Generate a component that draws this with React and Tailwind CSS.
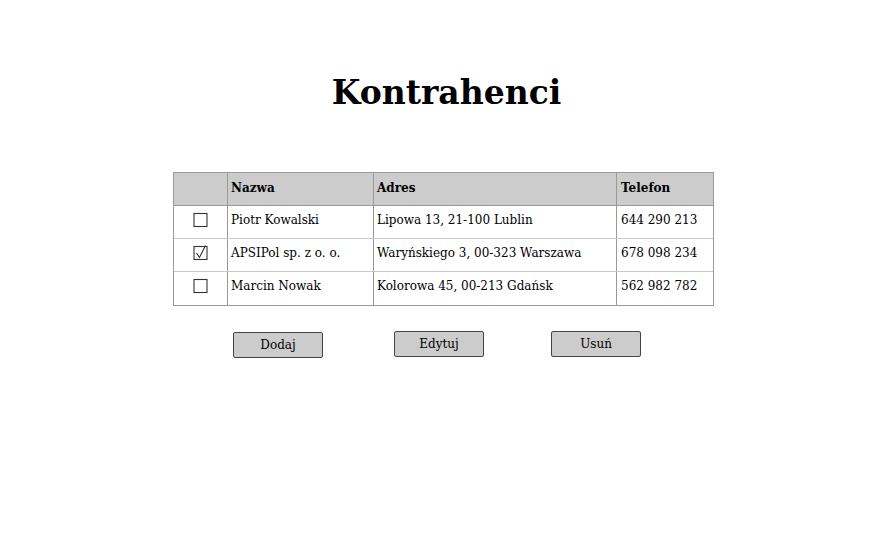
import React from 'react';

const rows = [
  { checked: false, name: 'Piotr Kowalski', address: 'Lipowa 13, 21-100 Lublin', phone: '644 290 213' },
  { checked: true, name: 'APSIPol sp. z o. o.', address: 'Waryńskiego 3, 00-323 Warszawa', phone: '678 098 234' },
  { checked: false, name: 'Marcin Nowak', address: 'Kolorowa 45, 00-213 Gdańsk', phone: '562 982 782' },
];

const Checkbox = ({ checked }) => (
  <svg width="16" height="16" viewBox="0 0 16 16">
    <rect x="1" y="1.5" width="13" height="13" fill="white" stroke="#333" strokeWidth="1.1" />
    {checked && <path d="M3.5 8 L6.5 12.5 L12.5 0.5" fill="none" stroke="#333" strokeWidth="1.1" />}
  </svg>
);

const App = () => {
  return (
    <div className="w-[891px] h-[536px] bg-white text-black font-['DejaVu_Serif',serif] flex flex-col">
      <h1 className="mt-[73px] text-center text-[33px] font-bold leading-[40px] pl-[2px]">Kontrahenci</h1>

      <div className="mt-[59px] ml-[173px] w-[541px] border border-[#9a9a9a] text-[12px]">
        <div className="flex h-[33px] bg-[#cccccc] border-b border-[#999] font-bold">
          <div className="w-[54px] border-r border-[#999]" />
          <div className="w-[146px] border-r border-[#999] px-[3px] pt-[6px]">Nazwa</div>
          <div className="w-[243px] border-r border-[#999] px-[3px] pt-[6px]">Adres</div>
          <div className="flex-1 px-[4px] pt-[6px]">Telefon</div>
        </div>
        {rows.map((r, i) => (
          <div key={i} className={`flex h-[33px] ${i < rows.length - 1 ? 'border-b border-[#c8c8c8]' : ''}`}>
            <div className="w-[54px] border-r border-[#999] flex items-start justify-center pt-[6px]">
              <Checkbox checked={r.checked} />
            </div>
            <div className="w-[146px] border-r border-[#999] px-[3px] pt-[5px]">{r.name}</div>
            <div className="w-[243px] border-r border-[#999] px-[3px] pt-[5px]">{r.address}</div>
            <div className="flex-1 px-[4px] pt-[5px]">{r.phone}</div>
          </div>
        ))}
      </div>

      <div className="mt-[25px] ml-[233px] flex items-start text-[12px]">
        <button className="w-[90px] h-[26px] mt-[1px] bg-[#cccccc] border border-[#444] rounded-[2px]">Dodaj</button>
        <button className="ml-[71px] w-[90px] h-[26px] bg-[#cccccc] border border-[#444] rounded-[2px]">Edytuj</button>
        <button className="ml-[67px] w-[90px] h-[26px] bg-[#cccccc] border border-[#444] rounded-[2px]">Usuń</button>
      </div>
    </div>
  );
};

export default App;
